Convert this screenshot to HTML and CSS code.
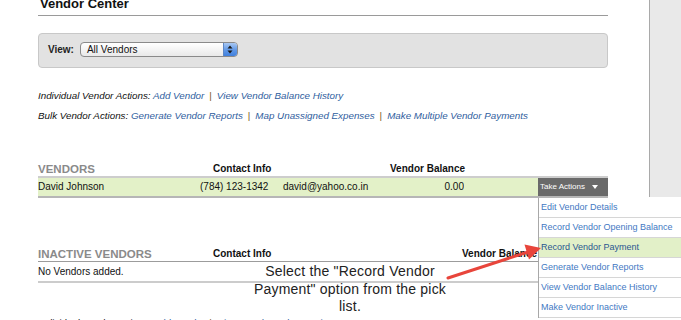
FILE: index.html
```html
<!DOCTYPE html>
<html>
<head>
<meta charset="utf-8">
<title>Vendor Center</title>
<link rel="stylesheet" href="styles.css">
</head>
<body>
<div class="page">
  <div class="main">
    <h1 class="title">Vendor Center</h1>
    <div class="view-panel">
      <span class="view-label">View:</span>
      <div class="select">
        <span class="select-text">All Vendors</span>
        <span class="select-btn">
          <svg width="6" height="9" viewBox="0 0 6 9"><path d="M3 0.5 L5.5 3.5 H0.5 Z M3 8.5 L5.5 5.5 H0.5 Z" fill="#1a1a1a"/></svg>
        </span>
      </div>
    </div>
    <div class="actions">
      <p class="action-line"><span>Individual Vendor Actions:</span> <a href="#">Add Vendor</a><span class="sep">|</span><a href="#">View Vendor Balance History</a></p>
      <p class="action-line"><span>Bulk Vendor Actions:</span> <a href="#">Generate Vendor Reports</a><span class="sep">|</span><a href="#">Map Unassigned Expenses</a><span class="sep">|</span><a href="#">Make Multiple Vendor Payments</a></p>
    </div>
    <section class="vendors">
      <div class="vgrid head">
        <div class="sec-title">VENDORS</div>
        <div class="col-contact">Contact Info</div>
        <div></div>
        <div class="num">Vendor Balance</div>
      </div>
      <div class="vgrid row">
        <div class="cell">David Johnson</div>
        <div class="cell">(784) 123-1342</div>
        <div class="cell">david@yahoo.co.in</div>
        <div class="cell num">0.00</div>
        <div class="cell"></div>
        <div class="take">Take Actions
          <svg class="caret" width="6" height="4" viewBox="0 0 6 4"><path d="M0 0 H6 L3 4 Z" fill="#fff"/></svg>
        </div>
      </div>
    </section>
    <section class="inactive">
      <div class="igrid head ihead">
        <div class="sec-title">INACTIVE VENDORS</div>
        <div class="col-contact">Contact Info</div>
        <div></div>
        <div class="num">Vendor Balance</div>
      </div>
      <div class="irow">No Vendors added.</div>
    </section>
    <p class="action-line cut"><span>Individual Vendor Actions:</span> <a href="#">Add Vendor</a><span class="sep">|</span><a href="#">View Vendor Balance History</a></p>
  </div>
  <div class="side"></div>

  <ul class="menu">
    <li>Edit Vendor Details</li>
    <li>Record Vendor Opening Balance</li>
    <li class="active">Record Vendor Payment</li>
    <li>Generate Vendor Reports</li>
    <li>View Vendor Balance History</li>
    <li>Make Vendor Inactive</li>
  </ul>

  <div class="note">Select the "Record Vendor<br>Payment" option from the pick<br>list.</div>

  <svg class="arrow" width="681" height="320" viewBox="0 0 681 320">
    <line x1="448" y1="278" x2="528" y2="252" stroke="#e8453b" stroke-width="3" stroke-linecap="round"/>
    <polygon points="541,248 529,259.5 524.5,244.5" fill="#e8453b"/>
  </svg>
</div>
</body>
</html>
```

FILE: styles.css
```css
html, body {
  margin: 0;
  padding: 0;
  background: #fff;
}

body {
  font-family: "Liberation Sans", Arial, Helvetica, sans-serif;
  color: #111;
}

.page {
  position: relative;
  width: 681px;
  height: 320px;
  overflow: hidden;
  display: flex;
  align-items: flex-start;
}

.main {
  flex: none;
  width: 649px;
  padding-left: 38px;
  box-sizing: border-box;
}

.main > * {
  width: 570px;
}

.side {
  flex: 1;
  height: 197px;
  border-left: 1px solid #a9a9a9;
  background: #e9e9e9;
}

.title {
  margin: -4px 0 0;
  padding: 0 0 3px 2px;
  font-size: 13px;
  line-height: 16px;
  font-weight: bold;
  color: #111;
  border-bottom: 1px solid #9a9a9a;
  box-sizing: border-box;
}

.view-panel {
  margin-top: 17px;
  height: 35px;
  box-sizing: border-box;
  border: 1px solid #c8c8c8;
  border-radius: 4px;
  background: #e2e2e2;
  display: flex;
  align-items: center;
  gap: 6px;
  padding: 0 0 2px 9px;
}

.view-label {
  font-size: 10px;
  font-weight: bold;
  color: #222;
}

.select {
  width: 158px;
  height: 15px;
  box-sizing: border-box;
  border: 1px solid #8a8a8a;
  border-radius: 4px;
  background: linear-gradient(#ffffff, #e9e9e9);
  display: flex;
  align-items: stretch;
  overflow: hidden;
}

.select-text {
  flex: 1;
  font-size: 10px;
  line-height: 13px;
  padding-left: 6px;
  color: #111;
}

.select-btn {
  width: 13px;
  border-left: 1px solid #5d86c4;
  background: linear-gradient(#a9c8f2, #5f97e6 55%, #3f7fdc);
  display: flex;
  align-items: center;
  justify-content: center;
}

.actions {
  margin-top: 18px;
}

.action-line {
  margin: 0;
  font-size: 9.8px;
  line-height: 20px;
  font-style: italic;
  white-space: nowrap;
  color: #111;
}

.action-line a {
  color: #2f5e9e;
  text-decoration: none;
}

.sep {
  font-style: normal;
  color: #7a5520;
  padding: 0 5px;
}

.vendors {
  margin-top: 36px;
}

.vgrid {
  display: grid;
  grid-template-columns: 162px 83px 107px 74px 74px 70px;
}

.igrid {
  display: grid;
  grid-template-columns: 162px 83px 179px 74px 72px;
}

.head {
  font-size: 10px;
  font-weight: bold;
  line-height: 14px;
  align-items: center;
  white-space: nowrap;
  color: #111;
}

.sec-title {
  font-size: 11.5px;
  color: #8a8a8a;
}

.col-contact {
  padding-left: 13px;
}

.num {
  text-align: right;
}

.row {
  border-top: 2px solid #cdcdcd;
  border-bottom: 2px solid #b6b6b6;
  font-size: 10px;
  line-height: 18px;
  white-space: nowrap;
}

.cell {
  background: #e3f1c8;
}

.take {
  background: #6a6a6a;
  color: #fff;
  font-size: 8px;
  padding-left: 2px;
  display: flex;
  align-items: center;
}

.caret {
  margin-left: 7px;
}

.inactive {
  margin-top: 49px;
}

.ihead {
  border-bottom: 1px solid #9c9c9c;
}

.irow {
  font-size: 10px;
  line-height: 19px;
  border-bottom: 2px solid #cccccc;
}

.cut {
  margin-top: 30px;
}

.menu {
  position: absolute;
  left: 538px;
  top: 198px;
  width: 160px;
  margin: 0;
  padding: 0;
  list-style: none;
  background: #fff;
  border-left: 1px solid #a8a8a8;
  z-index: 2;
}

.menu li {
  height: 19px;
  line-height: 19px;
  padding-left: 2px;
  border-bottom: 1px solid #d6d6d6;
  font-size: 9px;
  color: #4379c3;
  white-space: nowrap;
}

.menu li.active {
  background: #e2f0c8;
  color: #2a5690;
}

.note {
  position: absolute;
  left: 215px;
  top: 263px;
  width: 270px;
  text-align: center;
  font-size: 14px;
  line-height: 17.7px;
  letter-spacing: 0.2px;
  color: #222;
  z-index: 1;
}

.arrow {
  position: absolute;
  left: 0;
  top: 0;
  pointer-events: none;
  z-index: 3;
}
```
